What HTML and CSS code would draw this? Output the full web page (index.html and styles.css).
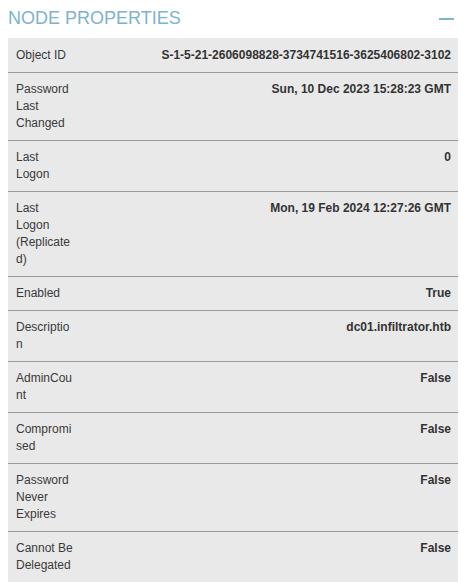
FILE: index.html
```html
<!DOCTYPE html>
<html>
<head>
<meta charset="utf-8">
<link rel="stylesheet" href="styles.css">
</head>
<body>
<div class="header">
  <h2 class="title">NODE PROPERTIES</h2>
  <span class="collapse"></span>
</div>
<div class="props">
  <div class="row"><div class="label">Object ID</div><div class="value">S-1-5-21-2606098828-3734741516-3625406802-3102</div></div>
  <div class="row"><div class="label">Password Last Changed</div><div class="value">Sun, 10 Dec 2023 15:28:23 GMT</div></div>
  <div class="row"><div class="label">Last Logon</div><div class="value">0</div></div>
  <div class="row"><div class="label">Last Logon (Replicated)</div><div class="value">Mon, 19 Feb 2024 12:27:26 GMT</div></div>
  <div class="row"><div class="label">Enabled</div><div class="value">True</div></div>
  <div class="row"><div class="label">Description</div><div class="value">dc01.infiltrator.htb</div></div>
  <div class="row"><div class="label">AdminCount</div><div class="value">False</div></div>
  <div class="row"><div class="label">Compromised</div><div class="value">False</div></div>
  <div class="row"><div class="label">Password Never Expires</div><div class="value">False</div></div>
  <div class="row"><div class="label">Cannot Be Delegated</div><div class="value">False</div></div>
</div>
</body>
</html>
```
FILE: styles.css
```css
body {
  margin: 8px;
  background: #ffffff;
  font-family: "Liberation Sans", Arial, sans-serif;
}
.header {
  display: flex;
  justify-content: space-between;
  align-items: center;
  height: 20px;
  margin-bottom: 10px;
}
.title {
  margin: 0;
  font-size: 18px;
  line-height: 20px;
  font-weight: normal;
  color: #7db3cc;
}
.collapse {
  display: block;
  width: 15px;
  height: 2px;
  background: #7db6d2;
  margin-right: 4px;
  margin-top: 2px;
}
.props {
  background: #e9e9e9;
  padding-top: 1px;
  margin-right: -1px;
}
.row {
  display: flex;
  border-bottom: 1px solid #9a9a9a;
  font-size: 12px;
  line-height: 17px;
}
.label {
  width: 58px;
  flex: none;
  padding: 8px;
  color: #3a3a3a;
  overflow-wrap: anywhere;
}
.value {
  flex: 1;
  padding: 8px;
  text-align: right;
  font-weight: bold;
  color: #333333;
}
```
